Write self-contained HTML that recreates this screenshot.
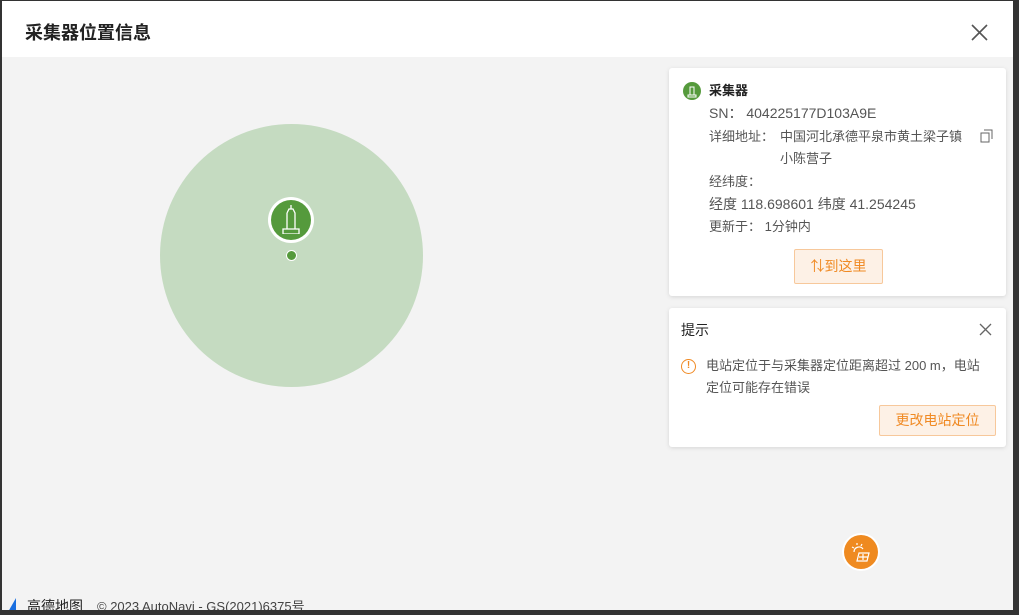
<!DOCTYPE html>
<html><head><meta charset="utf-8"><style>
*{margin:0;padding:0;box-sizing:border-box}
body{width:1019px;height:615px;background:#333;position:relative;overflow:hidden;font-family:"Liberation Sans","Noto Sans CJK SC",sans-serif}
.win{position:absolute;left:2px;top:1px;width:1011px;height:609px;background:#f3f3f3;overflow:hidden}
.hdr{position:absolute;left:0;top:0;width:100%;height:56px;background:#fff}
.hdr h1{position:absolute;left:23px;top:20px;font-size:18px;font-weight:bold;color:#222;line-height:24px}
.card{position:absolute;background:#fff;border-radius:3px;box-shadow:0 1px 4px rgba(0,0,0,.12)}
.t{position:absolute;font-size:13px;color:#555;line-height:18px;white-space:nowrap}
.btn{position:absolute;background:#fdf1e6;border:1px solid #f7c89b;color:#f08a24;font-size:14px;text-align:center;border-radius:2px}
</style></head><body>
<div class="win">
<div class="hdr"><h1>采集器位置信息</h1>
<svg style="position:absolute;left:969px;top:23px" width="17" height="17"><path d="M1 1L16 16M16 1L1 16" stroke="#555" stroke-width="1.6"/></svg></div>
<div style="position:absolute;left:158px;top:123px;width:263px;height:263px;border-radius:50%;background:#c5dbc1"></div>
<div style="position:absolute;left:266px;top:196px;width:46px;height:46px;border-radius:50%;background:#fff"></div>
<div style="position:absolute;left:283px;top:236px;width:0;height:0;border-left:6px solid transparent;border-right:6px solid transparent;border-top:6px solid #fff"></div>
<div style="position:absolute;left:269px;top:199px;width:40px;height:40px;border-radius:50%;background:#559a3c"></div>
<svg style="position:absolute;left:279px;top:203px" width="20" height="30"><path d="M10 1V5M6 9L8 5H12L14 9V25M6 9V25M2 25H18V30H2Z" stroke="#fff" stroke-width="1.3" fill="none"/></svg>
<div style="position:absolute;left:284px;top:249px;width:11px;height:11px;border-radius:50%;background:#559a3c;border:1px solid #fff"></div>
<div style="position:absolute;left:840px;top:532px;width:38px;height:38px;border-radius:50%;background:#fff"></div>
<div style="position:absolute;left:842px;top:534px;width:34px;height:34px;border-radius:50%;background:#ef8a20"></div>
<svg style="position:absolute;left:848px;top:540px" width="22" height="22"><path d="M4 11a5 5 0 0 1 9-3M7 2v2M2 6l2 1M12 3l-1 2M9 12h10l-2 8H7ZM13 13v6M9 16h9" stroke="#fff" stroke-width="1.2" fill="none"/></svg>
<div style="position:absolute;left:6px;top:597px;width:0;height:0;border-left:8px solid transparent;border-bottom:14px solid #1a6fe0"></div>
<div class="t" style="left:25px;top:596px;font-size:14px;color:#222">高德地图</div>
<div class="t" style="left:95px;top:597px;font-size:13px;color:#444">© 2023 AutoNavi - GS(2021)6375号</div>

<div class="card" style="left:667px;top:67px;width:337px;height:228px">
<div style="position:absolute;left:14px;top:14px;width:18px;height:18px;border-radius:50%;background:#559a3c"></div>
<svg style="position:absolute;left:18px;top:16px" width="10" height="14"><path d="M3 3h4v8H3ZM1 11h8v2H1Z" stroke="#fff" fill="none"/></svg>
<div class="t" style="left:40px;top:14px;font-weight:bold;color:#222">采集器</div>
<div class="t" style="left:40px;top:36px;font-size:14px">SN： 404225177D103A9E</div>
<div class="t" style="left:40px;top:60px">详细地址：</div>
<div class="t" style="left:111px;top:60px">中国河北承德平泉市黄土梁子镇</div>
<div class="t" style="left:111px;top:82px">小陈营子</div>
<svg style="position:absolute;left:311px;top:61px" width="13" height="14"><path d="M4 1h8v9M1 4h8v9H1Z" stroke="#666" fill="none"/></svg>
<div class="t" style="left:40px;top:105px">经纬度：</div>
<div class="t" style="left:40px;top:127px;font-size:14px">经度 118.698601 纬度 41.254245</div>
<div class="t" style="left:40px;top:150px">更新于： 1分钟内</div>
<div class="btn" style="left:125px;top:181px;width:89px;height:35px;line-height:33px">⇅到这里</div>
</div>

<div class="card" style="left:667px;top:307px;width:337px;height:139px">
<div class="t" style="left:12px;top:13px;color:#222;font-size:14px">提示</div>
<svg style="position:absolute;left:310px;top:15px" width="13" height="13"><path d="M1 1L12 12M12 1L1 12" stroke="#666" stroke-width="1.3"/></svg>
<div style="position:absolute;left:12px;top:51px;width:15px;height:15px;border-radius:50%;border:1.5px solid #f08a24;color:#f08a24;font-size:10px;font-weight:bold;text-align:center;line-height:12px">!</div>
<div class="t" style="left:37px;top:49px">电站定位于与采集器定位距离超过 200 m，电站</div>
<div class="t" style="left:37px;top:71px">定位可能存在错误</div>
<div class="btn" style="left:210px;top:97px;width:117px;height:31px;line-height:29px">更改电站定位</div>
</div>
</div>
</body></html>
